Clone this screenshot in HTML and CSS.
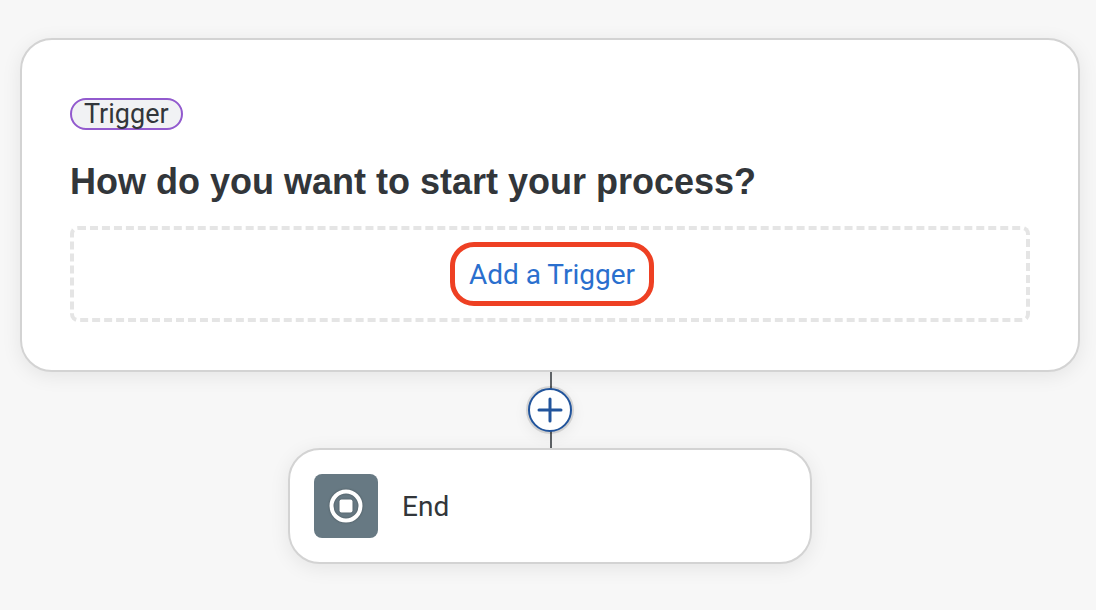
FILE: index.html
```html
<!DOCTYPE html>
<html lang="en">
<head>
<meta charset="utf-8">
<meta name="viewport" content="width=device-width, initial-scale=1">
<title>Process Builder</title>
<link rel="stylesheet" href="styles.css">
</head>
<body>
<main class="flow">
  <section class="card trigger-card">
    <span class="tag">Trigger</span>
    <h1 class="title">How do you want to start your process?</h1>
    <div class="dropzone">
      <button class="add-trigger" type="button">Add a Trigger</button>
    </div>
  </section>
  <div class="connector">
    <button class="add-step" type="button" aria-label="Add step">
      <svg class="plus" viewBox="0 0 26 26" aria-hidden="true"><path d="M13 2V24M2 13H24" fill="none" stroke="currentColor" stroke-width="3" stroke-linecap="round"/></svg>
    </button>
  </div>
  <section class="card end-card">
    <span class="end-icon">
      <svg class="stop" viewBox="0 0 36 36" aria-hidden="true"><circle cx="18" cy="18" r="14.5" fill="none" stroke="currentColor" stroke-width="4"/><rect x="11.500" y="11.500" width="13" height="13" rx="2" fill="currentColor"/></svg>
    </span>
    <span class="end-label">End</span>
  </section>
</main>
</body>
</html>
```

FILE: styles.css
```css
* { box-sizing: border-box; }
body {
  margin: 0;
  min-height: 100vh;
  background: #f7f7f7;
  color: #32363a;
  font-family: Roboto, "Liberation Sans", sans-serif;
  font-size: 28px;
}
.flow {
  display: flex;
  flex-direction: column;
  align-items: center;
  padding: 38px 16px 46px 20px;
}
.card {
  background: #fff;
  border: 2px solid #d3d3d3;
  box-shadow: 0 4px 20px rgba(0, 0, 0, 0.08);
}
.trigger-card {
  display: flex;
  flex-direction: column;
  align-items: flex-start;
  width: 100%;
  padding: 58px 48px 48px;
  border-radius: 32px;
}
.tag {
  height: 32px;
  padding: 0 12px;
  border: 2px solid #925ace;
  border-radius: 16px;
  background: #f1f2f4;
  font-size: 27px;
  line-height: 28px;
}
.title {
  margin: 28px 0 20px;
  font-family: "Liberation Sans", sans-serif;
  font-size: 36px;
  line-height: 48px;
  font-weight: 700;
}
.dropzone {
  display: flex;
  align-items: center;
  justify-content: center;
  width: 100%;
  height: 96px;
  padding-left: 4px;
  border: 4px dashed #e5e5e5;
  border-radius: 8px;
}
.add-trigger {
  height: 64px;
  padding: 0 14px;
  border: 5px solid #ee4023;
  border-radius: 24px;
  background: #fff;
  color: #2a6fce;
  font: inherit;
}
.connector {
  display: flex;
  justify-content: center;
  padding: 16px 0;
  background: linear-gradient(#5f6367, #5f6367) 22px 0 / 2px 100% no-repeat;
}
.add-step {
  display: flex;
  align-items: center;
  justify-content: center;
  width: 44px;
  height: 44px;
  padding: 0;
  border: 2px solid #21549c;
  border-radius: 50%;
  background: #fff;
  color: #21549c;
  box-shadow: 0 0 0 2px rgba(0, 0, 0, 0.12), 0 4px 16px rgba(0, 0, 0, 0.08);
}
.plus { width: 26px; height: 26px; }
.end-card {
  display: flex;
  align-items: center;
  gap: 24px;
  width: 100%;
  max-width: 524px;
  height: 116px;
  padding: 24px;
  border-radius: 32px;
}
.end-icon {
  display: flex;
  align-items: center;
  justify-content: center;
  width: 64px;
  height: 64px;
  border-radius: 8px;
  background: #677983;
  color: #fff;
}
.stop {
  width: 36px;
  height: 36px;
  filter: drop-shadow(0 0 1px rgba(0, 0, 0, 0.3));
}
```
